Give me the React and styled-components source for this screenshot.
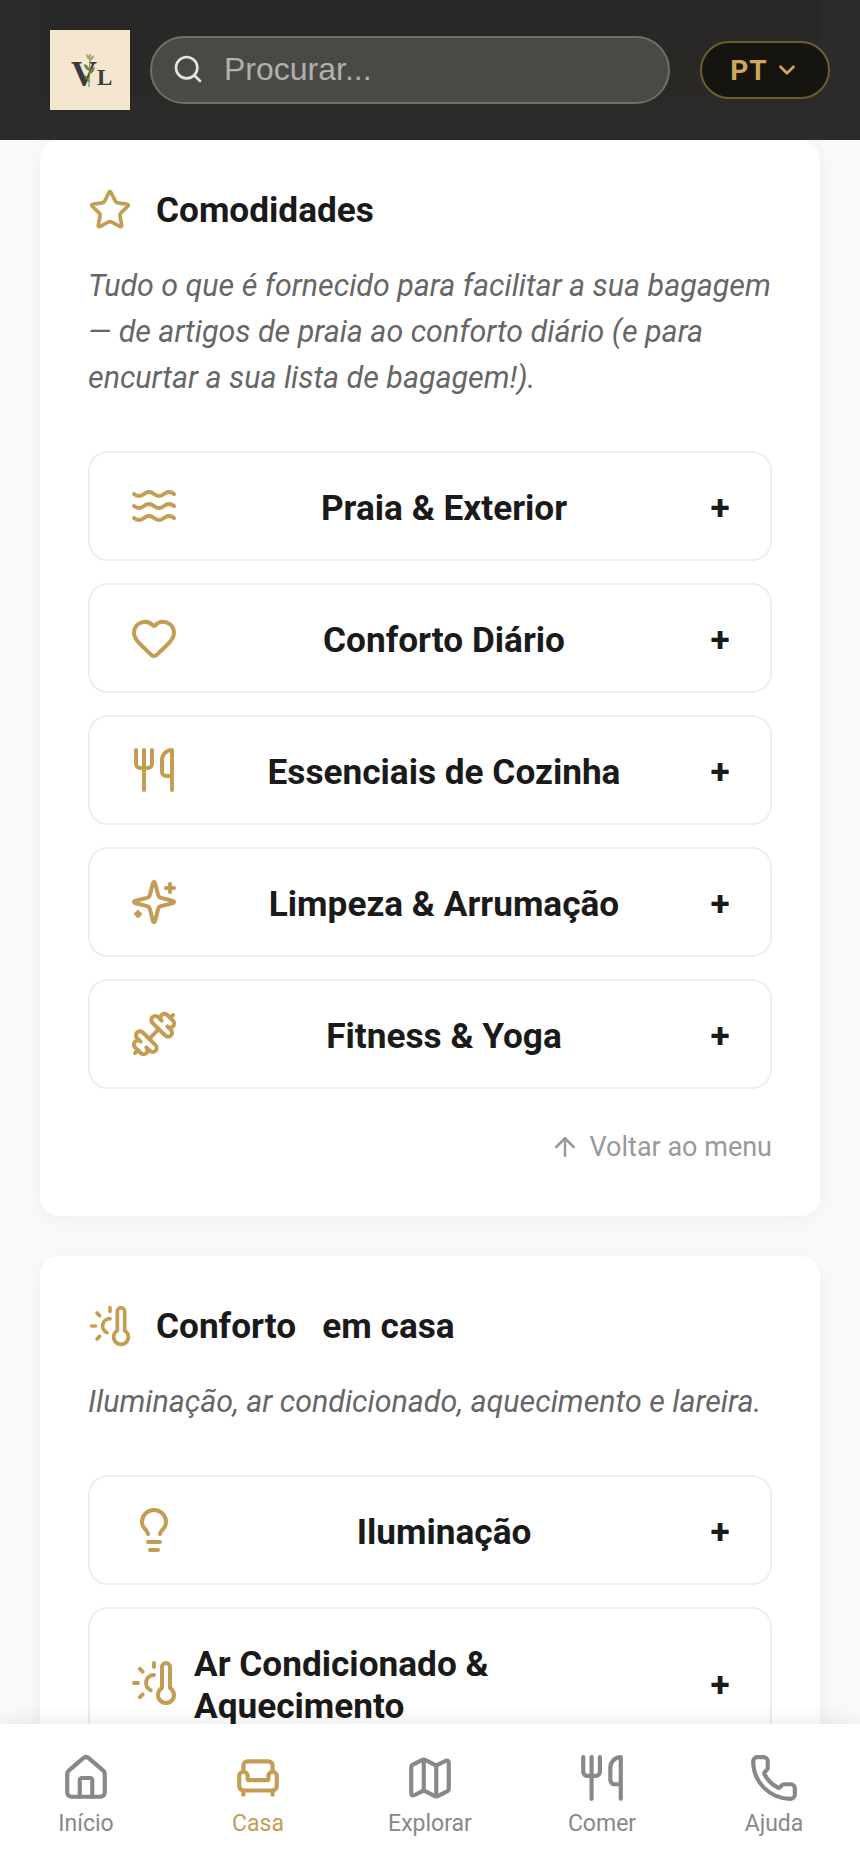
import React from 'react';
import styled, { createGlobalStyle } from 'styled-components';
import {
  Search, ChevronDown, Star, Waves, Heart, Utensils, Dumbbell,
  ArrowUp, ThermometerSun, Lightbulb, House, Armchair, Map, Phone,
} from 'lucide-react';

const GOLD = '#c49d55';

const GlobalStyle = createGlobalStyle`
  html, body { margin: 0; padding: 0; background: #fafafa; }
  * { box-sizing: border-box; }
  body { font-family: Roboto, "Liberation Sans", sans-serif; }
`;

const Page = styled.div`
  width: 860px;
  height: 1870px;
  display: flex;
  flex-direction: column;
  overflow: hidden;
  background: #fafafa;
`;

const Header = styled.header`
  position: relative;
  z-index: 2;
  flex: 0 0 140px;
  display: flex;
  align-items: center;
  gap: 20px;
  padding: 0 30px 0 50px;
  background: #2b2b2b;

  &::before {
    content: '';
    position: absolute;
    left: 40px;
    right: 40px;
    top: 0;
    bottom: 30px;
    background: linear-gradient(#282827 0%, #292825 75%, rgba(43, 42, 38, 0.5) 100%);
  }
`;

const Logo = styled.svg`
  position: relative;
  flex: 0 0 80px;
  width: 80px;
  height: 80px;
  background: #f5e6cf;
`;

const LogoLetters = styled.text`
  font-family: "Liberation Serif", serif;
  font-weight: 700;
  fill: #3a3a3e;
`;

const SearchBox = styled.label`
  position: relative;
  flex: 1;
  height: 68px;
  display: flex;
  align-items: center;
  gap: 18px;
  padding: 0 20px 2px 20px;
  border: 2px solid #6e6e6a;
  border-radius: 34px;
  background: #494945;
  color: #e4e4e0;
`;

const SearchInput = styled.input`
  flex: 1;
  min-width: 0;
  border: 0;
  outline: 0;
  background: transparent;
  font-family: "Liberation Sans", sans-serif;
  font-size: 32px;
  color: #fff;

  &::placeholder {
    color: #b0b0ac;
    opacity: 1;
  }
`;

const LangButton = styled.button`
  position: relative;
  flex: 0 0 130px;
  height: 58px;
  margin-left: 10px;
  display: flex;
  align-items: center;
  justify-content: center;
  gap: 6px;
  border: 2px solid #6f5c30;
  border-radius: 29px;
  background: #15140f;
  color: #cfa85e;
  font-family: Roboto, sans-serif;
  font-size: 28px;
  font-weight: 700;
  letter-spacing: 1px;
`;

const Main = styled.main`
  flex: 1;
  min-height: 0;
  overflow: hidden;
  padding: 0 40px;
  display: flex;
  flex-direction: column;
  gap: 40px;
`;

const Card = styled.section`
  flex: none;
  background: #fff;
  border-radius: 20px;
  padding: 48px 48px 47px;
  box-shadow: 0 4px 24px rgba(0, 0, 0, 0.05);
`;

const CardHead = styled.div`
  display: flex;
  align-items: center;
  gap: 24px;
  height: 44px;
  color: ${GOLD};
`;

const CardTitle = styled.h2`
  margin: 0;
  font-size: 35.2px;
  font-weight: 700;
  color: #1a1a1a;
  white-space: pre;
`;

const CardText = styled.p`
  margin: 31px 0 50px;
  font-size: 30.4px;
  line-height: 46px;
  font-style: italic;
  color: #666;
`;

const List = styled.div`
  display: flex;
  flex-direction: column;
  gap: 22px;
`;

const Row = styled.div`
  display: flex;
  align-items: center;
  gap: 16px;
  padding: 30px 40px;
  border: 2px solid #eeeeee;
  border-radius: 20px;
  background: #fff;
  color: ${GOLD};
`;

const RowIcon = styled.span`
  flex: 0 0 48px;
  height: 42px;
  display: flex;
  align-items: center;
`;

const RowLabel = styled.span`
  flex: 1;
  padding-top: 4px;
  font-size: 35.2px;
  line-height: 42px;
  font-weight: 700;
  color: #1a1a1a;
  text-align: ${(p) => (p.$wrapped ? 'left' : 'center')};
`;

const RowPlus = styled.span`
  flex: 0 0 20px;
  padding-top: 4px;
  font-size: 35.2px;
  font-weight: 700;
  line-height: 42px;
  color: #1a1a1a;
  text-align: center;
`;

const BackLink = styled.a`
  display: flex;
  justify-content: flex-end;
  align-items: center;
  gap: 10px;
  margin-top: 36px;
  height: 44px;
  font-size: 27px;
  color: #999;
`;

const Nav = styled.nav`
  position: relative;
  z-index: 2;
  flex: 0 0 146px;
  display: grid;
  grid-template-columns: repeat(5, 1fr);
  padding-top: 29px;
  background: #fff;
  box-shadow: 0 -4px 20px rgba(0, 0, 0, 0.08);
`;

const NavItem = styled.a`
  display: flex;
  flex-direction: column;
  align-items: center;
  gap: 8px;
  color: ${(p) => (p.$active ? GOLD : '#888')};
  font-size: 23px;
  line-height: 26px;
`;

// lucide's current sparkles has a dot at the lower left, the reference has a small plus
function SparklesPlus({ size, strokeWidth }) {
  return (
    <svg width={size} height={size} viewBox="0 0 24 24" fill="none" stroke="currentColor" strokeWidth={strokeWidth} strokeLinecap="round" strokeLinejoin="round">
      <path d="M9.937 15.5A2 2 0 0 0 8.5 14.063l-6.135-1.582a.5.5 0 0 1 0-.962L8.5 9.936A2 2 0 0 0 9.937 8.5l1.582-6.135a.5.5 0 0 1 .963 0L14.063 8.5A2 2 0 0 0 15.5 9.937l6.135 1.581a.5.5 0 0 1 0 .964L15.5 14.063a2 2 0 0 0-1.437 1.437l-1.582 6.135a.5.5 0 0 1-.963 0z" />
      <path d="M20 3v4" />
      <path d="M22 5h-4" />
      <path d="M4 17v2" />
      <path d="M5 18H3" />
    </svg>
  );
}

const groups = [
  {
    key: 'comodidades',
    Icon: Star,
    title: 'Comodidades',
    text: 'Tudo o que é fornecido para facilitar a sua bagagem — de artigos de praia ao conforto diário (e para encurtar a sua lista de bagagem!).',
    back: true,
    rows: [
      { Icon: Waves, label: 'Praia & Exterior' },
      { Icon: Heart, label: 'Conforto Diário' },
      { Icon: Utensils, label: 'Essenciais de Cozinha' },
      { Icon: SparklesPlus, label: 'Limpeza & Arrumação' },
      { Icon: Dumbbell, label: 'Fitness & Yoga' },
    ],
  },
  {
    key: 'conforto',
    Icon: ThermometerSun,
    title: 'Conforto   em casa',
    text: 'Iluminação, ar condicionado, aquecimento e lareira.',
    rows: [
      { Icon: Lightbulb, label: 'Iluminação' },
      { Icon: ThermometerSun, label: 'Ar Condicionado & Aquecimento', wrapped: true },
    ],
  },
];

const tabs = [
  { Icon: House, label: 'Início' },
  { Icon: Armchair, label: 'Casa', active: true },
  { Icon: Map, label: 'Explorar' },
  { Icon: Utensils, label: 'Comer' },
  { Icon: Phone, label: 'Ajuda' },
];

function App() {
  return (
    <Page>
      <GlobalStyle />
      <Header>
        <Logo viewBox="0 0 80 80">
          <LogoLetters>
            <tspan x="21" y="56" fontSize="36">V</tspan>
            <tspan x="47" y="55" fontSize="23">L</tspan>
          </LogoLetters>
          <path d="M40 24 L39 57" stroke="#7d8f55" strokeWidth="1.2" fill="none" />
          <path d="M40 30 C37 29 36 27 36 24 C39 25 40 27 40 30Z M40 31 C43 30 44 28 44 25 C41 26 40 28 40 31Z" fill="#9aab6c" />
          <path d="M39.5 41 C36 40 34 37 34 34 C38 35 39.5 38 39.5 41Z M40 44 C43 43 45 40 45 37 C41 38 40 41 40 44Z" fill="#6f8450" />
          <path d="M39 52 C36 51 34 48 34 45 C37 46 39 49 39 52Z" fill="#5d7242" />
        </Logo>
        <SearchBox>
          <Search size={32} strokeWidth={2} />
          <SearchInput placeholder="Procurar..." />
        </SearchBox>
        <LangButton>
          PT
          <ChevronDown size={26} strokeWidth={2.4} />
        </LangButton>
      </Header>
      <Main>
        {groups.map((group) => (
          <Card key={group.key}>
            <CardHead>
              <group.Icon size={44} strokeWidth={2} />
              <CardTitle>{group.title}</CardTitle>
            </CardHead>
            <CardText>{group.text}</CardText>
            <List>
              {group.rows.map((row) => (
                <Row key={row.label}>
                  <RowIcon>
                    <row.Icon size={48} strokeWidth={2} />
                  </RowIcon>
                  <RowLabel $wrapped={row.wrapped}>{row.label}</RowLabel>
                  <RowPlus>+</RowPlus>
                </Row>
              ))}
            </List>
            {group.back && (
              <BackLink>
                <ArrowUp size={30} strokeWidth={2} />
                Voltar ao menu
              </BackLink>
            )}
          </Card>
        ))}
      </Main>
      <Nav>
        {tabs.map((tab) => (
          <NavItem key={tab.label} $active={tab.active}>
            <tab.Icon size={50} strokeWidth={2} />
            {tab.label}
          </NavItem>
        ))}
      </Nav>
    </Page>
  );
}

export default App;
